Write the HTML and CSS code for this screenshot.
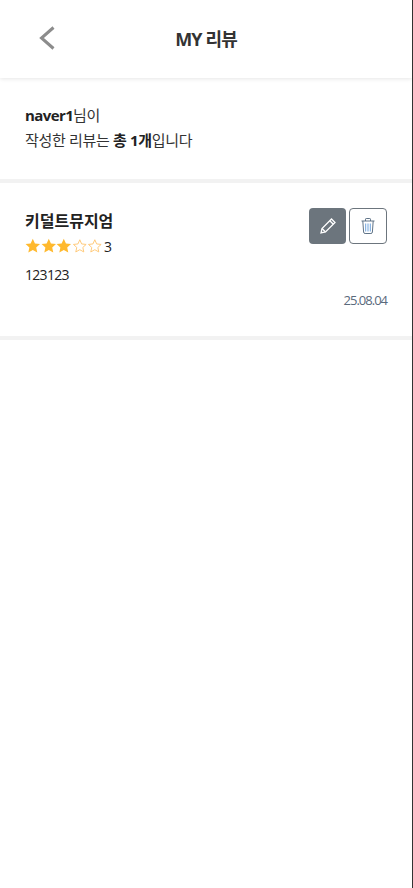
FILE: index.html
```html
<!DOCTYPE html>
<html lang="ko">
<head>
<meta charset="utf-8">
<title>MY 리뷰</title>
<link rel="stylesheet" href="styles.css">
</head>
<body>
<div class="page">
  <header class="top">
    <button class="back" aria-label="뒤로">
      <svg width="16" height="24" viewBox="0 0 16 24"><path d="M14.500 1.500 L2.500 12 L14.500 22.500" fill="none" stroke="#8c8c8c" stroke-width="3"/></svg>
    </button>
    <h1 class="title">MY 리뷰</h1>
  </header>
  <section class="summary">
    <p><b class="user">naver1</b>님이</p>
    <p>작성한 리뷰는 <b>총 1개</b>입니다</p>
  </section>
  <article class="review">
    <div class="review-head">
      <div>
        <h2 class="name">키덜트뮤지엄</h2>
        <div class="rating">
          <svg class="star" viewBox="0 0 16 16"><path class="on" d="M8 .8l2.200 4.800 5.200.6-3.900 3.500 1.100 5.200L8 12.300l-4.600 2.600 1.100-5.200L.6 6.200l5.200-.6z"/></svg>
          <svg class="star" viewBox="0 0 16 16"><path class="on" d="M8 .8l2.200 4.800 5.200.6-3.900 3.500 1.100 5.200L8 12.300l-4.600 2.600 1.100-5.200L.6 6.200l5.200-.6z"/></svg>
          <svg class="star" viewBox="0 0 16 16"><path class="on" d="M8 .8l2.200 4.800 5.200.6-3.900 3.500 1.100 5.200L8 12.300l-4.600 2.600 1.100-5.200L.6 6.200l5.200-.6z"/></svg>
          <svg class="star" viewBox="0 0 16 16"><path class="off" d="M8 1.800l1.900 4.300 4.600.5-3.400 3.100 1 4.600L8 12l-4.100 2.300 1-4.600-3.400-3.100 4.600-.5z"/></svg>
          <svg class="star" viewBox="0 0 16 16"><path class="off" d="M8 1.800l1.900 4.300 4.600.5-3.400 3.100 1 4.600L8 12l-4.100 2.300 1-4.600-3.400-3.100 4.600-.5z"/></svg>
          <span class="score">3</span>
        </div>
      </div>
      <div class="actions">
        <button class="btn edit" aria-label="수정">
          <svg width="16" height="16" viewBox="0 0 16 16" fill="none" stroke="#fff" stroke-width="1.300"><path d="M1 15l1-4.500L11.500 1l3.500 3.500L5.500 14z"/><path d="M2 10.500L5.500 14M9.800 2.700l3.500 3.500"/></svg>
        </button>
        <button class="btn del" aria-label="삭제">
          <svg width="14" height="16" viewBox="0 0 14 16" fill="none" stroke="#5f7387" stroke-width="1"><path d="M.5 3h13M4.500 3V1.200q0-.7.7-.7h3.600q.7 0 .7.7V3"/><path d="M1.800 3l.8 11q.1 1.500 1.500 1.500h5.800q1.400 0 1.500-1.500l.8-11"/><path d="M4.700 5.500v8M7 5.500v8M9.300 5.500v8" stroke="#6fa3dc"/></svg>
        </button>
      </div>
    </div>
    <p class="body">123123</p>
    <time class="date">25.08.04</time>
  </article>
</div>
</body>
</html>
```
FILE: styles.css
```css
* { box-sizing: border-box; }
html, body { margin: 0; padding: 0; background: #fff; }
body {
  font-family: "Open Sans", "Noto Sans CJK KR", sans-serif;
  color: #222;
}
.page {
  width: 413px;
  min-height: 888px;
  border-right: 1px solid #333;
}
p, h1, h2 { margin: 0; }
button { padding: 0; border: 0; background: none; }

.top {
  height: 78px;
  padding-bottom: 3px;
  display: flex;
  align-items: center;
  justify-content: center;
  position: relative;
  box-shadow: 0 1px 4px rgba(0, 0, 0, .1);
}
.back {
  position: absolute;
  left: 39px;
  top: 26px;
  width: 16px;
  height: 24px;
  display: block;
}
.back svg { display: block; }
.title {
  font-size: 18px;
  font-weight: 700;
  letter-spacing: -.85px;
  color: #333;
}

.summary {
  height: 105px;
  padding: 25px 25px 0;
  border-bottom: 4px solid #f2f2f2;
  font-size: 15px;
  line-height: 25px;
  letter-spacing: -.32px;
  color: #333;
}
.summary b { color: #222; font-weight: 700; }
.summary .user { letter-spacing: -.6px; }

.review {
  height: 157px;
  padding: 25px 25px 0;
  border-bottom: 4px solid #f2f2f2;
}
.review-head {
  display: flex;
  justify-content: space-between;
  align-items: flex-start;
}
.name {
  font-size: 16px;
  line-height: 26px;
  font-weight: 700;
  letter-spacing: 0;
}
.rating {
  display: flex;
  align-items: center;
  height: 22px;
  margin-top: 1px;
}
.star { width: 15.600px; height: 15.600px; display: block; }
.on { fill: #ffb92e; }
.off { fill: #fff; stroke: #ffc978; stroke-width: 1; }
.score { font-size: 14px; margin-left: 1px; letter-spacing: -.5px; }

.actions { display: flex; gap: 3px; }
.btn {
  height: 36px;
  border-radius: 4px;
  display: flex;
  align-items: center;
  justify-content: center;
}
.edit { width: 37px; background: #6c757d; }
.del { width: 38px; border: 1px solid #6c757d; background: #fff; }

.body {
  font-size: 14px;
  line-height: 20px;
  letter-spacing: -.7px;
  margin-top: 8px;
}
.date {
  display: block;
  text-align: right;
  font-size: 13px;
  line-height: 18px;
  letter-spacing: -1px;
  color: #5a6a7c;
  margin-top: 6px;
}
```
